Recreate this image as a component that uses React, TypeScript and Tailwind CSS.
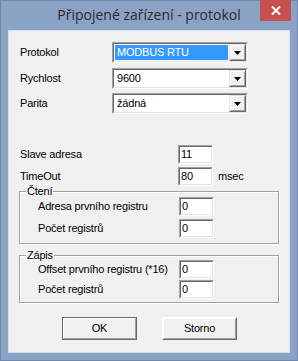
import React from "react";

const sunkenOuter =
  "border border-t-[#a0a0a0] border-l-[#a0a0a0] border-b-white border-r-white";
const sunkenInner =
  "border border-t-[#696969] border-l-[#696969] border-b-[#e3e3e3] border-r-[#e3e3e3]";

const Arrow = () => (
  <svg width="7" height="4" viewBox="0 0 7 4">
    <polygon points="0,0 7,0 3.5,4" fill="#000" />
  </svg>
);

const Combo = ({ value, selected }: { value: string; selected?: boolean }) => (
  <div className={`w-[136px] h-[21px] ${sunkenOuter}`}>
    <div className={`h-full flex bg-white ${sunkenInner}`}>
      <div className="flex-1 flex items-center p-[1px]">
        <div
          className={`h-full w-full flex items-center pl-[2px] ${
            selected ? "bg-[#3399ff] text-white" : "text-black"
          }`}
        >
          {value}
        </div>
      </div>
      <div className="w-[17px] h-full border border-t-[#e3e3e3] border-l-[#e3e3e3] border-b-[#696969] border-r-[#696969]">
        <div className="h-full flex items-center justify-center bg-[#f0f0f0] border border-t-white border-l-white border-b-[#a0a0a0] border-r-[#a0a0a0]">
          <Arrow />
        </div>
      </div>
    </div>
  </div>
);

const Edit = ({ value }: { value: string }) => (
  <div className={`w-[35px] h-[19px] ${sunkenOuter}`}>
    <div className={`h-full flex items-center bg-white pl-[1px] ${sunkenInner}`}>{value}</div>
  </div>
);

const Button = ({ label, isDefault }: { label: string; isDefault?: boolean }) => (
  <div
    className={`w-[75px] h-[23px] border ${
      isDefault
        ? "border-[#696969]"
        : "border-t-white border-l-white border-b-[#696969] border-r-[#696969]"
    }`}
  >
    <div className="h-full flex items-center justify-center bg-[#f0f0f0] border border-t-white border-l-white border-b-[#a0a0a0] border-r-[#a0a0a0]">
      {label}
    </div>
  </div>
);

const Group = ({ title, children, className }: { title: string; children: React.ReactNode; className?: string }) => (
  <fieldset
    className={`ml-[10px] w-[260px] border border-[#a0a0a0] shadow-[1px_1px_0_#fff,inset_1px_1px_0_#fff] ${className ?? ""}`}
  >
    <legend className="ml-[6px] px-[1px] leading-[12px]">{title}</legend>
    {children}
  </fieldset>
);

export default function App() {
  return (
    <div className="w-[298px] h-[361px] bg-[#8aa3c5] border border-[#6e88ac] flex flex-col font-['Liberation_Sans',Arial,sans-serif] text-[11px] tracking-[-0.2px] text-black">
      {/* Title bar */}
      <div className="h-[29px] flex relative">
        <div className="flex-1 flex items-center justify-center pb-[2px] font-['Open_Sans','Noto_Sans',sans-serif] text-[14px] tracking-normal text-[#2b2b2b]">
          Připojené zařízení - protokol
        </div>
        <div className="absolute right-[6px] top-[-1px] w-[31px] h-[21px] bg-[#c75050] flex items-center justify-center">
          <svg width="10" height="9" viewBox="0 0 10 9">
            <path d="M1 0.5 L9 8.5 M9 0.5 L1 8.5" stroke="#fff" strokeWidth="2" />
          </svg>
        </div>
      </div>

      {/* Client area */}
      <div className="ml-[7px] w-[282px] h-[323px] bg-[#f0f0f0] border border-[#d6dfeb] flex flex-col">
        <div className="flex items-center h-[21px] mt-[11px]">
          <span className="ml-[11px] w-[92px]">Protokol</span>
          <Combo value="MODBUS RTU" selected />
        </div>
        <div className="flex items-center h-[21px] mt-[5px]">
          <span className="ml-[11px] w-[92px]">Rychlost</span>
          <Combo value="9600" />
        </div>
        <div className="flex items-center h-[21px] mt-[4px]">
          <span className="ml-[11px] w-[92px]">Parita</span>
          <Combo value="žádná" />
        </div>

        <div className="flex items-center h-[19px] mt-[31px]">
          <span className="ml-[11px] w-[158px]">Slave adresa</span>
          <Edit value="11" />
        </div>
        <div className="flex items-center h-[19px] mt-[3px]">
          <span className="ml-[11px] w-[158px]">TimeOut</span>
          <Edit value="80" />
          <span className="ml-[5px]">msec</span>
        </div>

        <Group title="Čtení" className="mt-[-1px] pb-[5px]">
          <div className="flex items-center h-[19px]">
            <span className="ml-[18px] w-[141px]">Adresa prvního registru</span>
            <Edit value="0" />
          </div>
          <div className="flex items-center h-[19px] mt-[3px]">
            <span className="ml-[18px] w-[141px]">Počet registrů</span>
            <Edit value="0" />
          </div>
        </Group>

        <Group title="Zápis" className="mt-[5px] pb-[3px]">
          <div className="flex items-center h-[19px] mt-[-1px]">
            <span className="ml-[18px] w-[141px]">Offset prvního registru (*16)</span>
            <Edit value="0" />
          </div>
          <div className="flex items-center h-[19px] mt-[1px]">
            <span className="ml-[18px] w-[141px]">Počet registrů</span>
            <Edit value="0" />
          </div>
        </Group>

        <div className="flex mt-[14px] ml-[53px] gap-[25px]">
          <Button label="OK" isDefault />
          <Button label="Storno" />
        </div>
      </div>
    </div>
  );
}
